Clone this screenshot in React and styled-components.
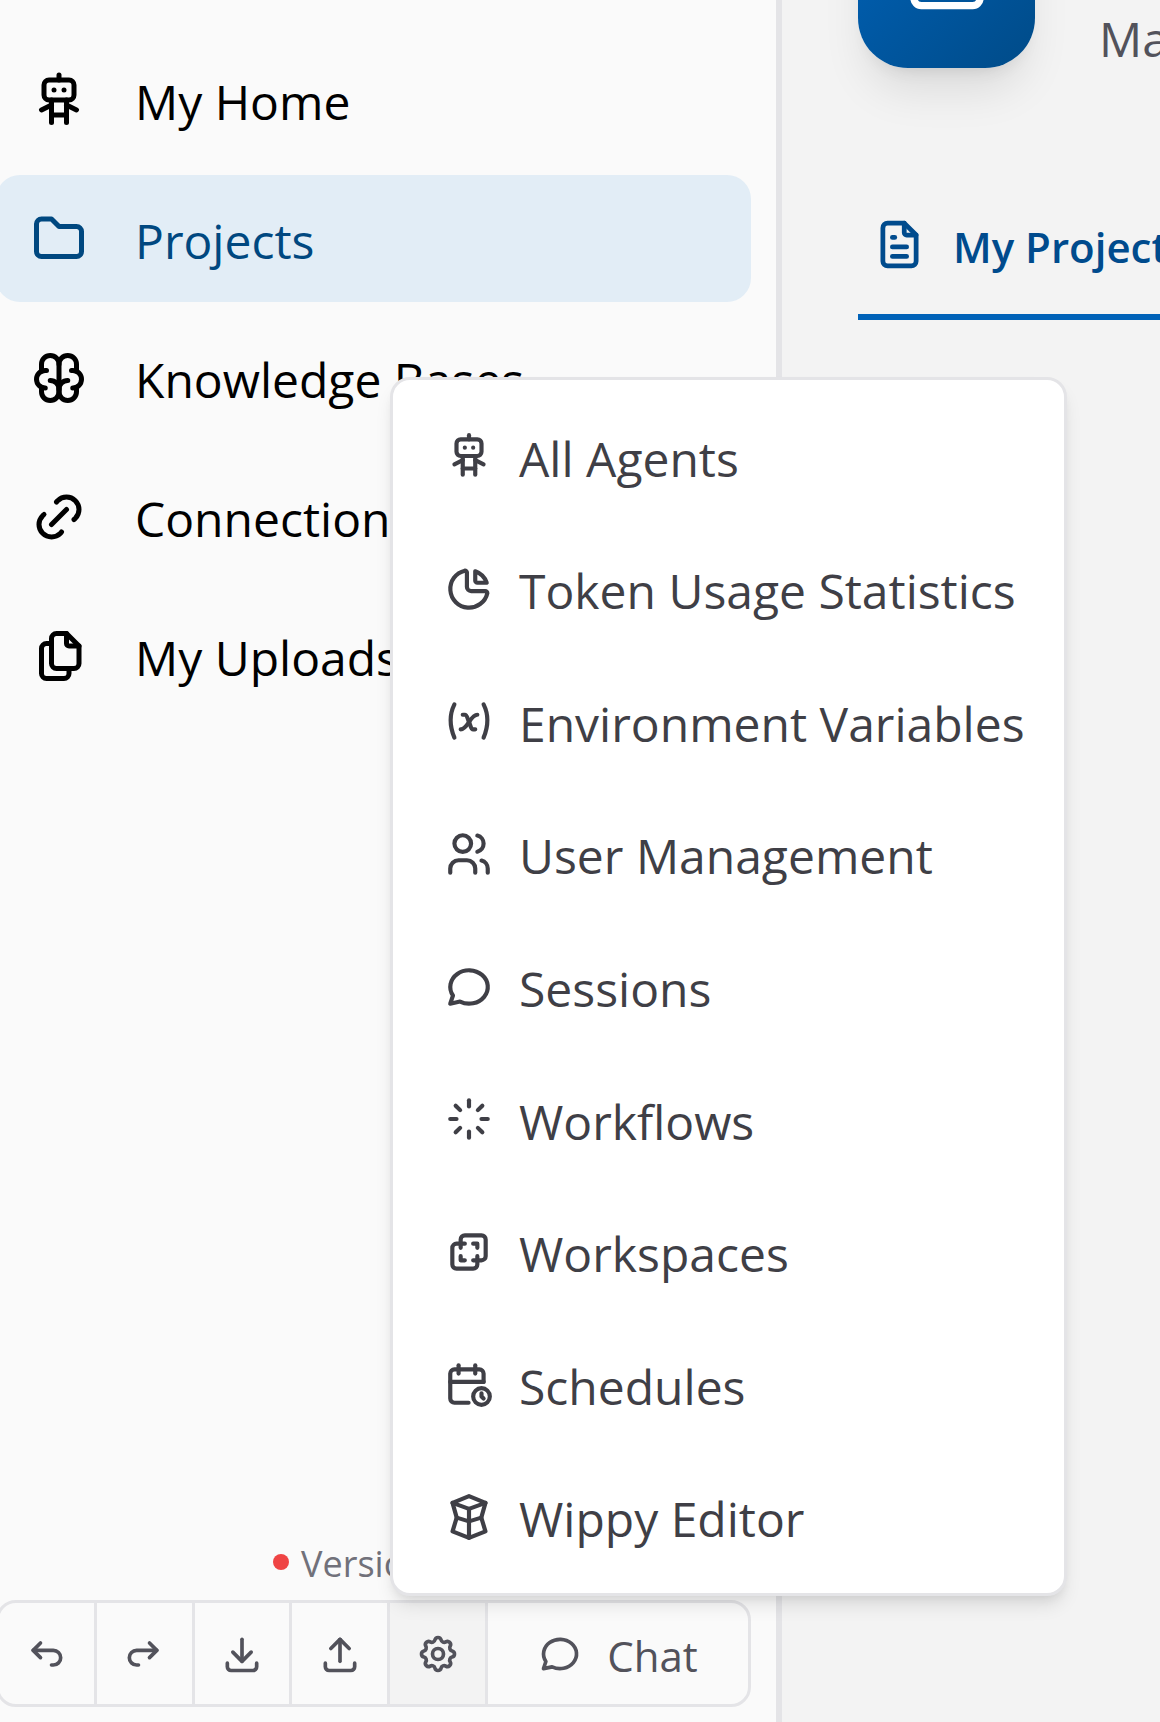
import React from "react";
import styled, { createGlobalStyle } from "styled-components";
import {
  TbRobot,
  TbFolder,
  TbBrain,
  TbLink,
  TbFiles,
  TbChartPie,
  TbVariable,
  TbUsers,
  TbMessageCircle,
  TbLoader,
  TbCalendarTime,
  TbArrowBackUp,
  TbArrowForwardUp,
  TbDownload,
  TbUpload,
  TbSettings,
  TbFileText,
} from "react-icons/tb";

const GlobalStyle = createGlobalStyle`
  *, *::before, *::after { box-sizing: border-box; }
  body {
    margin: 0;
    background: #f3f3f3;
    font-family: "Segoe UI", "Open Sans", "Noto Sans", sans-serif;
    font-size: 48px;
    overflow-x: hidden;
  }
  button { font: inherit; color: inherit; cursor: pointer; }
  a { color: inherit; text-decoration: none; }
  svg { flex: none; }
`;

const Shell = styled.div`
  position: relative;
  display: flex;
  min-height: 100vh;
  overflow: hidden;
`;

const Sidebar = styled.aside`
  flex: 0 0 782px;
  display: flex;
  flex-direction: column;
  justify-content: space-between;
  padding: 36px 25px 15px 0;
  border-right: 6px solid #e4e4e7;
  background: #fafafa;
`;

const Nav = styled.nav`
  display: flex;
  flex-direction: column;
  gap: 12px;
  margin-left: -4px;
`;

const NavLink = styled.a`
  display: flex;
  align-items: center;
  gap: 46px;
  height: 127px;
  padding: 0 33px;
  border-radius: 24px;
  white-space: nowrap;
  background: ${(p) => (p.$active ? "#e2edf6" : "transparent")};
  && { color: ${(p) => (p.$active ? "#004880" : "#000000")}; }
`;

const Label = styled.span`
  padding-top: 4px;
`;

const SidebarFooter = styled.div`
  display: flex;
  flex-direction: column;
  gap: 12px;
  margin-left: -4px;
`;

const Version = styled.div`
  display: flex;
  align-items: center;
  gap: 12px;
  padding-left: 277px;
  color: #71717a;
  font-size: 36px;
  line-height: 48px;
`;

const Dot = styled.span`
  width: 16px;
  height: 16px;
  border-radius: 50%;
  background: #ef4444;
`;

const Toolbar = styled.div`
  display: grid;
  grid-template-columns: repeat(5, 1fr) 260px;
  height: 107px;
  border: 3px solid #e4e4e7;
  border-radius: 20px;
  overflow: hidden;
  color: #52525b;
  font-size: 42px;
`;

const Tool = styled.button`
  display: flex;
  align-items: center;
  justify-content: center;
  gap: 25px;
  padding: 0;
  border: 0;
  border-right: ${(p) => (p.$wide ? "0" : "3px solid #e4e4e7")};
  background: ${(p) => (p.$active ? "#f3f3f3" : "transparent")};
`;

const Main = styled.main`
  flex: 1 1 0;
  min-width: 0;
  padding-left: 76px;
  overflow: hidden;
`;

const Hero = styled.header`
  display: flex;
  align-items: flex-end;
  gap: 64px;
  margin-top: -109px;
`;

const HeroTile = styled.div`
  flex: none;
  display: grid;
  place-items: center;
  width: 177px;
  height: 177px;
  border-radius: 50px;
  background: linear-gradient(135deg, #0062b8, #004b88);
  color: #ffffff;
  box-shadow: 0 30px 45px -9px rgba(0, 0, 0, 0.1), 0 12px 18px -12px rgba(0, 0, 0, 0.12);
`;

const HeroText = styled.p`
  margin: 0;
  color: #52525b;
  line-height: 58px;
  white-space: nowrap;
`;

const Tabs = styled.div`
  display: flex;
  margin-top: 92px;
`;

const Tab = styled.button`
  flex: none;
  display: flex;
  align-items: center;
  gap: 25px;
  height: 160px;
  padding: 14px 13px 0;
  border: 0;
  border-bottom: 6px solid #0062b8;
  background: none;
  && { color: #004b8d; }
  font-size: 42px;
  font-weight: 600;
  white-space: nowrap;
`;

const Popover = styled.div`
  position: absolute;
  left: 390px;
  top: 377px;
  bottom: 126px;
  width: 677px;
  display: flex;
  flex-direction: column;
  padding: 10px 0;
  border: 3px solid #e4e4e7;
  border-radius: 20px;
  background: #ffffff;
  box-shadow: 0 12px 18px -3px rgba(0, 0, 0, 0.1), 0 6px 12px -6px rgba(0, 0, 0, 0.1);
`;

const MenuItem = styled.button`
  flex: 1 1 0;
  display: flex;
  align-items: center;
  gap: 25px;
  padding: 0 0 0 51px;
  border: 0;
  background: none;
  && { color: #3f3f46; }
  text-align: left;
  white-space: nowrap;
`;

function DrawnIcon({ size, children }) {
  return (
    <svg
      width={size}
      height={size}
      viewBox="0 0 24 24"
      fill="none"
      stroke="currentColor"
      strokeWidth="2"
      strokeLinecap="round"
      strokeLinejoin="round"
      aria-hidden="true"
    >
      {children}
    </svg>
  );
}

function WorkspacesIcon({ size }) {
  return (
    <DrawnIcon size={size}>
      <path d="M10 8h-4a2 2 0 0 0 -2 2v8a2 2 0 0 0 2 2h8a2 2 0 0 0 2 -2v-4" />
      <path d="M14 16h4a2 2 0 0 0 2 -2v-8a2 2 0 0 0 -2 -2h-8a2 2 0 0 0 -2 2v4" />
      <path d="M14 8h2v2" />
      <path d="M8 14v2h2" />
    </DrawnIcon>
  );
}

function WippyIcon({ size }) {
  return (
    <DrawnIcon size={size}>
      <path d="M12 2l7.9 3.2l-2 7.1l2 6.6l-7.9 3.1l-7.9 -3.1l2 -6.6l-2 -7.1z" />
      <path d="M4.1 5.2l7.9 2.9l7.9 -2.9" />
      <path d="M6.1 12.3l5.9 1.8l5.9 -1.8" />
      <path d="M12 8.1v13.9" />
    </DrawnIcon>
  );
}

const navItems = [
  { label: "My Home", Icon: TbRobot },
  { label: "Projects", Icon: TbFolder, active: true },
  { label: "Knowledge Bases", Icon: TbBrain },
  { label: "Connections", Icon: TbLink },
  { label: "My Uploads", Icon: TbFiles },
];

const menuItems = [
  { label: "All Agents", Icon: TbRobot },
  { label: "Token Usage Statistics", Icon: TbChartPie },
  { label: "Environment Variables", Icon: TbVariable },
  { label: "User Management", Icon: TbUsers },
  { label: "Sessions", Icon: TbMessageCircle },
  { label: "Workflows", Icon: TbLoader },
  { label: "Workspaces", Icon: WorkspacesIcon },
  { label: "Schedules", Icon: TbCalendarTime },
  { label: "Wippy Editor", Icon: WippyIcon },
];

const tools = [
  { label: "Undo", Icon: TbArrowBackUp },
  { label: "Redo", Icon: TbArrowForwardUp },
  { label: "Download", Icon: TbDownload },
  { label: "Upload", Icon: TbUpload },
  { label: "Settings", Icon: TbSettings, active: true },
];

export default function App() {
  return (
    <>
      <GlobalStyle />
      <Shell>
        <Sidebar>
          <Nav aria-label="Main">
            {navItems.map(({ label, Icon, active }) => (
              <NavLink key={label} href="#" $active={active} aria-current={active ? "page" : undefined}>
                <Icon size={60} />
                <Label>{label}</Label>
              </NavLink>
            ))}
          </Nav>
          <SidebarFooter>
            <Version>
              <Dot />
              <Label>Version</Label>
            </Version>
            <Toolbar role="toolbar" aria-label="Actions">
              {tools.map(({ label, Icon, active }) => (
                <Tool key={label} type="button" aria-label={label} $active={active}>
                  <Icon size={44} />
                </Tool>
              ))}
              <Tool type="button" $wide>
                <TbMessageCircle size={44} />
                <Label>Chat</Label>
              </Tool>
            </Toolbar>
          </SidebarFooter>
        </Sidebar>
        <Main>
          <Hero>
            <HeroTile>
              <TbFolder size={88} />
            </HeroTile>
            <HeroText>Manage</HeroText>
          </Hero>
          <Tabs role="tablist">
            <Tab type="button" role="tab" aria-selected="true">
              <TbFileText size={57} />
              <Label>My Projects</Label>
            </Tab>
          </Tabs>
        </Main>
        <Popover role="menu" aria-label="Settings">
          {menuItems.map(({ label, Icon }) => (
            <MenuItem key={label} type="button" role="menuitem">
              <Icon size={50} />
              <Label>{label}</Label>
            </MenuItem>
          ))}
        </Popover>
      </Shell>
    </>
  );
}
